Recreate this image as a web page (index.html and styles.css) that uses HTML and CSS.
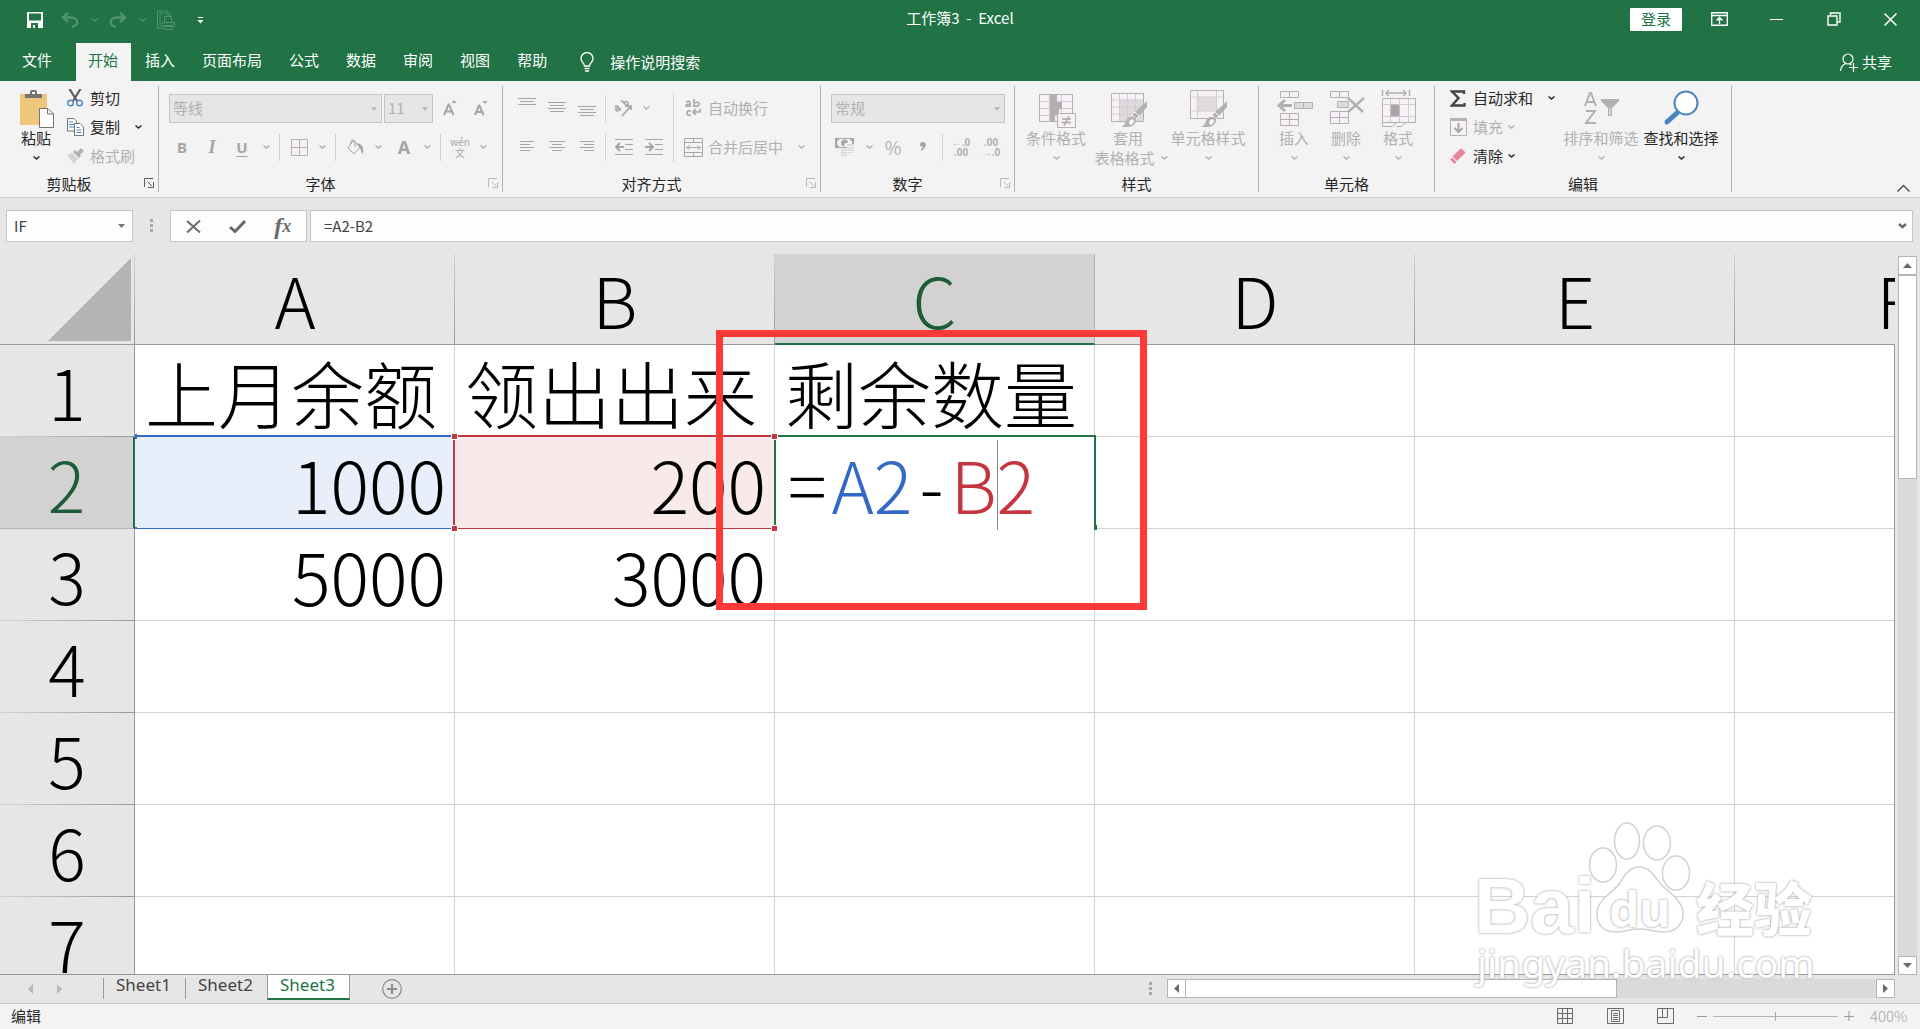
FILE: index.html
```html
<!DOCTYPE html>
<html lang="zh-CN">
<head>
<meta charset="utf-8">
<title>工作簿3 - Excel</title>
<link rel="stylesheet" href="styles.css">
</head>
<body>
<svg class="defs" aria-hidden="true">
  <symbol id="chev" viewBox="0 0 7 4"><path d="M.5 .5 3.5 3 6.5 .5" fill="none" stroke="currentColor" stroke-width="1.4"/></symbol>
  <symbol id="launch" viewBox="0 0 10 10"><path d="M.5 9V.5H9M3.500 3.500 8 8M9.500 4v5.500H4" fill="none" stroke="currentColor"/></symbol>
  <symbol id="brush" viewBox="0 0 28 28"><path d="M27 1v6l-8 9-4-4z" fill="#b1b1b1"/><path d="M15 12l4 4-3 3-4-4z" fill="#b1b1b1" stroke="#f3f3f3" stroke-width="1"/><path d="M1 27c4-1 4-5 6-8 2-3 7-3 9 0 1 4-3 8-8 8z" fill="#b1b1b1"/><path d="M9 23c0-3 3-5 5-3 1 2-2 5-4 5z" fill="#f3f3f3"/></symbol>
</svg>

<header class="top">
  <div class="titlebar">
    <div class="quick">
      <button class="qb save" aria-label="保存"><svg width="16" height="16" viewBox="0 0 16 16"><path d="M0 0h16v16H0zM2 1.500v7h12v-7zM4 11v5h2v-3h2v3h3v-5z" fill="#fff" fill-rule="evenodd"/></svg></button>
      <button class="qb" aria-label="撤消"><svg width="18" height="16" viewBox="0 0 18 16"><path d="M7 1 2 5.500 7 10M2 5.500h8c8 0 8 9 1 9" fill="none" stroke="#4f9270" stroke-width="2.500"/></svg></button>
      <button class="qc" aria-label="撤消选项"><svg width="7" height="4"><use href="#chev"/></svg></button>
      <button class="qb" aria-label="恢复"><svg width="18" height="16" viewBox="0 0 18 16"><path d="M11 1l5 4.500-5 4.500M16 5.500H8c-8 0-8 9-1 9" fill="none" stroke="#4f9270" stroke-width="2.500"/></svg></button>
      <button class="qc" aria-label="恢复选项"><svg width="7" height="4"><use href="#chev"/></svg></button>
      <button class="qb print" aria-label="打印预览"><svg width="20" height="20" viewBox="0 0 20 20" fill="none" stroke="#4f9270"><path d="M7 18.500H1.500V1H11l4 4M11 1v4h4M7 16H4V3h5"/><path d="M8.500 12V6.500h7V12M6.500 12.500h12v4h-12zM8.500 15.500h8v4h-8z"/></svg></button>
      <button class="qb" aria-label="自定义快速访问工具栏"><svg width="7" height="7" viewBox="0 0 7 7"><path d="M1 0h5v1H1zM.5 3h6l-3 3.500z" fill="#fff"/></svg></button>
    </div>
    <h1 class="title">工作簿3&nbsp; -&nbsp; Excel</h1>
    <div class="window">
      <button class="login">登录</button>
      <button class="wb" aria-label="功能区显示选项"><svg width="17" height="14" viewBox="0 0 17 14" fill="none" stroke="#fff" stroke-width="1.400"><path d="M.7.7h15.600v12.600H.7zM.7 3.500h15.600M8.500 12V6M5.500 8.500l3-3 3 3"/></svg></button>
      <button class="wb" aria-label="最小化"><svg width="13" height="14"><path d="M0 7.500h13" stroke="#fff"/></svg></button>
      <button class="wb" aria-label="向下还原"><svg width="14" height="14" viewBox="0 0 14 14" fill="none" stroke="#fff" stroke-width="1.400"><path d="M1 4h9v9H1zM3.500 4V1H13v9h-3"/></svg></button>
      <button class="wb" aria-label="关闭"><svg width="13" height="13" viewBox="0 0 13 13"><path d="M.5.5l12 12m0-12-12 12" stroke="#fff" stroke-width="1.500"/></svg></button>
    </div>
  </div>
  <nav class="tabs">
    <a class="tab file" href="#">文件</a>
    <a class="tab active" href="#">开始</a>
    <a class="tab" href="#">插入</a>
    <a class="tab" href="#">页面布局</a>
    <a class="tab" href="#">公式</a>
    <a class="tab" href="#">数据</a>
    <a class="tab" href="#">审阅</a>
    <a class="tab" href="#">视图</a>
    <a class="tab" href="#">帮助</a>
    <a class="tell" href="#"><svg width="14" height="20" viewBox="0 0 14 20" fill="none" stroke="#fff" stroke-width="1.300"><path d="M4.500 14c0-3-3.500-4-3.500-7.500a6 6 0 0 1 12 0C13 10 9.500 11 9.500 14zM4.500 16.500h5M5 19h4"/></svg>操作说明搜索</a>
    <a class="share" href="#"><svg width="18" height="19" viewBox="0 0 18 19" fill="none" stroke="#fff" stroke-width="1.200"><circle cx="8" cy="6" r="5"/><path d="M.6 18c0-4 2-6 5-7.500M9.500 11l2 1M13.500 10v9M9 14.500h9"/></svg>共享</a>
  </nav>
</header>

<section class="ribbon">
  <div class="group">
    <div class="body g-clip">
      <button class="big paste"><span class="pic"><svg width="36" height="38" viewBox="0 0 36 38"><path d="M1 4h27v31H1z" fill="#eec77c"/><path d="M6 8V4h5V2q0-2 2-2h3q2 0 2 2v2h5v4z" fill="#737373"/><path d="M13 2h3v2h-3z" fill="#fff"/><path d="M20.500 18.500h8.500l5.500 5.500v13.500h-14z" fill="#fff" stroke="#737373"/><path d="M28.500 18v6h6" fill="none" stroke="#737373"/></svg></span><span>粘贴</span><svg class="ch" width="7" height="4"><use href="#chev"/></svg></button>
      <div class="stack">
        <button class="small"><span class="si"><svg width="16" height="18" viewBox="0 0 16 18"><path d="M2.500 0 10 12M13.500 0 6 12" stroke="#5c5c5c" stroke-width="2.200"/><g fill="none" stroke="#4a83bd" stroke-width="1.400"><circle cx="3.500" cy="14" r="2.800"/><circle cx="12.500" cy="14" r="2.800"/></g></svg></span>剪切</button>
        <button class="small"><span class="si"><svg width="17" height="18" viewBox="0 0 17 18"><path d="M.5.5H7L9.500 3v10H.5z" fill="#fff" stroke="#737373"/><path d="M2 4h4M2 6.500h5M2 9h5" stroke="#4a83bd"/><path d="M7.500 5.500H13l3.500 3.500v8.500h-9z" fill="#fff" stroke="#737373"/><path d="M9.500 9.500h3M9.500 12h5M9.500 14.500h5" stroke="#4a83bd"/></svg></span>复制<svg class="ch far" width="7" height="4"><use href="#chev"/></svg></button>
        <button class="small" disabled><span class="si"><svg width="17" height="16" viewBox="0 0 17 16"><path d="M0 7l5-2 6 6-4 5z" fill="#d6d2d6"/><path d="M6 4l2-2 6 6-2 2zM10 4l4-4 3 3-4 4z" fill="#b1b1b1"/></svg></span>格式刷</button>
      </div>
    </div>
    <div class="name">剪贴板<button class="launch" aria-label="剪贴板设置"><svg width="10" height="10"><use href="#launch"/></svg></button></div>
  </div>

  <div class="group">
    <div class="body rows g-font">
      <div class="row">
        <label class="combo c-font"><select aria-label="字体" disabled><option>等线</option></select></label>
        <label class="combo c-size"><select aria-label="字号" disabled><option>11</option></select></label>
        <button class="ib" disabled aria-label="增大字号"><svg width="14" height="16" viewBox="0 0 14 16"><path d="M1 15 5.500 4.500h.5L10.500 15M3 11.500h6" fill="none" stroke="#a6a6a6" stroke-width="2"/><path d="M8.500 3l2.500-3 2.500 3z" fill="#a6a6a6"/></svg></button>
        <button class="ib" disabled aria-label="减小字号"><svg width="14" height="16" viewBox="0 0 14 16"><path d="M1 15 5 5.500h.5L9.500 15M3 12h5" fill="none" stroke="#a6a6a6" stroke-width="2"/><path d="M8.500 1l2.500 3 2.500-3z" fill="#a6a6a6"/></svg></button>
      </div>
      <div class="row">
        <button class="ib b" disabled>B</button><button class="ib i" disabled>I</button><button class="ib u" disabled>U</button><button class="cb" disabled aria-label="下划线选项"><svg width="7" height="4"><use href="#chev"/></svg></button>
        <span class="sep"></span>
        <button class="ic" disabled aria-label="边框"><svg width="17" height="17" viewBox="0 0 17 17" fill="#f7f1f7" stroke="#b1b1b1"><path d="M.5.5h16v16H.5zM8.500.5v16M.5 8.500h16"/></svg></button><button class="cb" disabled aria-label="边框选项"><svg width="7" height="4"><use href="#chev"/></svg></button>
        <span class="sep"></span>
        <button class="ic" disabled aria-label="填充颜色"><svg width="17" height="17" viewBox="0 0 17 17"><path d="M6 2l7 6-6 7-6-6z" fill="#f7f1f7" stroke="#a6a6a6"/><path d="M4 5V2q1.500-2.500 4 0v6" fill="none" stroke="#a6a6a6"/><path d="M10 4c5 1 7 4 6 11-2-1-2-5-4-7z" fill="#a6a6a6"/></svg></button><button class="cb" disabled aria-label="填充颜色选项"><svg width="7" height="4"><use href="#chev"/></svg></button>
        <button class="ic fc" disabled>A</button><button class="cb" disabled aria-label="字体颜色选项"><svg width="7" height="4"><use href="#chev"/></svg></button>
        <span class="sep"></span>
        <button class="ic wen" disabled><span>wén</span><span>文</span></button><button class="cb" disabled aria-label="拼音选项"><svg width="7" height="4"><use href="#chev"/></svg></button>
      </div>
    </div>
    <div class="name">字体<button class="launch off" aria-label="字体设置"><svg width="10" height="10"><use href="#launch"/></svg></button></div>
  </div>

  <div class="group">
    <div class="body g-align">
      <div class="rows">
        <div class="row">
          <button class="ib" disabled aria-label="顶端对齐"><svg width="18" height="20" viewBox="0 0 18 20" stroke="#a6a6a6"><path d="M0 .5h18M2 3.500h14M0 6.500h18"/></svg></button><button class="ib" disabled aria-label="垂直居中"><svg width="18" height="20" viewBox="0 0 18 20" stroke="#a6a6a6"><path d="M0 4.500h18M2 7.500h14M0 10.500h18M2 13.500h14"/></svg></button><button class="ib" disabled aria-label="底端对齐"><svg width="18" height="20" viewBox="0 0 18 20" stroke="#a6a6a6"><path d="M0 8.500h18M2 11.500h14M0 14.500h18M2 17.500h14"/></svg></button>
          <span class="sep"></span>
          <button class="ic ori" disabled aria-label="方向"><svg width="20" height="18" viewBox="0 0 20 18"><g fill="none" stroke="#a6a6a6" stroke-width="1.700"><path d="M2 8q2-2 3 0l3 3M6 9q-4 0-3 2t5-1M8 1l7 7M10 4q4-3 5 0t-3 3M9 17 18 7M14 7h4v4"/></g></svg></button><button class="cb" disabled aria-label="方向选项"><svg width="7" height="4"><use href="#chev"/></svg></button>
        </div>
        <div class="row">
          <button class="ib" disabled aria-label="左对齐"><svg width="14" height="12" stroke="#a6a6a6"><path d="M0 .5h14M0 3.500h10M0 6.500h14M0 9.500h10"/></svg></button><button class="ib" disabled aria-label="居中"><svg width="16" height="12" stroke="#a6a6a6"><path d="M0 .5h16M3 3.500h10M0 6.500h16M3 9.500h10"/></svg></button><button class="ib" disabled aria-label="右对齐"><svg width="14" height="12" stroke="#a6a6a6"><path d="M0 .5h14M4 3.500h10M0 6.500h14M4 9.500h10"/></svg></button>
          <span class="sep"></span>
          <button class="ib" disabled aria-label="减少缩进量"><svg width="18" height="17" viewBox="0 0 18 17" fill="none" stroke="#a6a6a6"><path d="M0 .5h18M10 5.500h8M10 10.500h8M0 15.500h18"/><path d="M1 8h8M5 4 1 8l4 4" stroke-width="2"/></svg></button><button class="ib" disabled aria-label="增加缩进量"><svg width="18" height="17" viewBox="0 0 18 17" fill="none" stroke="#a6a6a6"><path d="M0 .5h18M10 5.500h8M10 10.500h8M0 15.500h18"/><path d="M0 8h8M4 4l4 4-4 4" stroke-width="2"/></svg></button>
        </div>
      </div>
      <span class="sep tall"></span>
      <div class="rows">
        <div class="row"><button class="txt" disabled><span class="ib"><svg width="16" height="18" viewBox="0 0 16 18" fill="none" stroke="#a6a6a6" stroke-width="1.600"><path d="M1 3q4-2 4 1v4M5 5q-4 0-4 1.500T5 7M9 0v8M9 4q5-2 5 1t-5 2M6 12q-4-1-4 2t4 2M15 10v3H8M11 10l-3 3 3 3"/></svg></span>自动换行</button></div>
        <div class="row"><button class="txt" disabled><span class="ib"><svg width="19" height="19" viewBox="0 0 19 19" fill="none" stroke="#a6a6a6"><path d="M.5.5h18v18H.5zM.5 4.500h18M.5 14.500h18M9.500.5v4M9.500 14.500v4M2.500 9.500h14M5.500 7 3 9.500 5.500 12M13.500 7 16 9.500 13.500 12"/></svg></span>合并后居中<svg class="ch mer" width="7" height="4"><use href="#chev"/></svg></button></div>
      </div>
    </div>
    <div class="name">对齐方式<button class="launch off" aria-label="对齐设置"><svg width="10" height="10"><use href="#launch"/></svg></button></div>
  </div>

  <div class="group">
    <div class="body rows g-num">
      <div class="row"><label class="combo c-num"><select aria-label="数字格式" disabled><option>常规</option></select></label></div>
      <div class="row">
        <button class="ib" disabled aria-label="会计数字格式"><svg width="20" height="20" viewBox="0 0 20 20"><path d="M0 1h19v10H0z" fill="#a6a6a6"/><path d="M2 4q2 0 2-2h11q0 2 2 2v4q-2 0-2 2H4q0-2-2-2z" fill="#f3f3f3"/><circle cx="9.500" cy="6" r="3.500" fill="#a6a6a6"/><path d="M10 6h4v4h-5z" fill="#f3f3f3"/><path d="M6 12h6v7H6zM12 7h7v9h-7z" fill="#dcd8dc"/><path d="M6 14.500h6M6 17h6M12 9.500h7M12 12h7M12 14.500h7" stroke="#f3f3f3"/></svg></button><button class="cb" disabled aria-label="货币选项"><svg width="7" height="4"><use href="#chev"/></svg></button><button class="ib pct" disabled>%</button><button class="ib" disabled aria-label="千位分隔样式"><svg width="6" height="10" viewBox="0 0 6 10"><path d="M3 0c4 0 4 6-2 9V7q2-1 2-2C-1 5-1 0 3 0z" fill="#a6a6a6"/></svg></button>
        <span class="sep"></span>
        <button class="ib dec" disabled><span>←.0</span><span>.00</span></button><button class="ib dec" disabled><span>.00</span><span>→.0</span></button>
      </div>
    </div>
    <div class="name">数字<button class="launch off" aria-label="数字设置"><svg width="10" height="10"><use href="#launch"/></svg></button></div>
  </div>

  <div class="group">
    <div class="body g-style">
      <button class="big w64" disabled><span class="pic"><svg width="38" height="38" viewBox="0 0 38 38"><path d="M1.500 4.500h33v27h-33z" fill="#f7f1f7" stroke="#b1b1b1"/><path d="M1 11.500h34M1 18.500h34M1 25.500h34M11.500 5v27M23.500 5v27" stroke="#d0ccd0"/><path d="M12 5h7v7h5v7h-3v6h-4v7h-5z" fill="#b1b1b1"/><path d="M19.500 23.500h18v14h-18z" fill="#f7f1f7" stroke="#b1b1b1"/><path d="M24 29h9M24 32.500h9M31 26l-5 10" stroke="#a6a6a6" stroke-width="1.300"/></svg></span><span>条件格式</span><svg class="ch" width="7" height="4"><use href="#chev"/></svg></button>
      <button class="big w80" disabled><span class="pic"><svg width="38" height="38" viewBox="0 0 38 38"><path d="M1.500 3.500h32v28h-32z" fill="#f7f1f7" stroke="#b1b1b1"/><path d="M10 10h23v21H10z" fill="#dedade"/><path d="M2 10h31M2 17h31M2 24h31M9.500 4v27M17.500 4v27M25.500 4v27" stroke="#d0ccd0"/><use href="#brush" x="10" y="10" width="28" height="28"/></svg></span><span>套用</span><span class="line">表格格式<svg width="7" height="4"><use href="#chev"/></svg></span></button>
      <button class="big w80" disabled><span class="pic"><svg width="38" height="38" viewBox="0 0 38 38"><path d="M.5.5h33v28H.5z" fill="#f7f1f7" stroke="#b1b1b1"/><path d="M8 7h18v14H8z" fill="#dedade"/><path d="M1 7h32M1 21h32M7.500 1v27M26.500 1v27" stroke="#d0ccd0"/><use href="#brush" x="10" y="10" width="28" height="28"/></svg></span><span>单元格样式</span><svg class="ch" width="7" height="4"><use href="#chev"/></svg></button>
    </div>
    <div class="name plain">样式</div>
  </div>

  <div class="group">
    <div class="body g-cells">
      <button class="big w52" disabled><span class="pic"><svg width="38" height="38" viewBox="0 0 38 38" fill="#f7f1f7" stroke="#b1b1b1"><path d="M4.500 1.500h18v6h-18zM13.500 1.500v6M4.500 23.500h18v12h-18zM4.500 29.500h18M13.500 23.500v12"/><path d="M18.500 12.500h18v6h-18zM27.500 12.500v6" fill="#dedade"/><path d="M3 15.500h13M9 10l-6 5.500 6 5.500" fill="none" stroke-width="3"/></svg></span><span>插入</span><svg class="ch" width="7" height="4"><use href="#chev"/></svg></button>
      <button class="big w52" disabled><span class="pic"><svg width="38" height="38" viewBox="0 0 38 38" fill="#f7f1f7" stroke="#b1b1b1"><path d="M2.500 1.500h18v6h-18zM11.500 1.500v6M2.500 21.500h18v12h-18zM2.500 27.500h18M11.500 21.500v12"/><path d="M9.500 11.500h11v6h-11z" fill="#dedade"/><path d="M20 8l15 14M36 8 20 22" stroke-width="2.500"/></svg></span><span>删除</span><svg class="ch" width="7" height="4"><use href="#chev"/></svg></button>
      <button class="big w52" disabled><span class="pic"><svg width="38" height="38" viewBox="0 0 38 38" fill="#f7f1f7" stroke="#b1b1b1"><path d="M2.500 0v6M29.500 0v6M6 3h20M9 0 6 3l3 3M23 0l3 3-3 3" fill="none" stroke-width="1.500"/><path d="M2.500 8.500h33v24h-33zM2.500 32.500v4h10l4-4M16 36.500h6l4-4"/><path d="M3 14.500h32M3 26.500h32M10.500 9v23M19.500 9v23M28.500 9v23" stroke="#d0ccd0"/><path d="M11 15h8v11h-8z" fill="#a6a6a6"/></svg></span><span>格式</span><svg class="ch" width="7" height="4"><use href="#chev"/></svg></button>
    </div>
    <div class="name plain">单元格</div>
  </div>

  <div class="group">
    <div class="body g-edit">
      <div class="stack">
        <button class="small"><span class="si"><svg width="16" height="17" viewBox="0 0 16 17"><path d="M14 4V1.500H2L8.500 8 2 15.500h12.500V13" fill="none" stroke="#444" stroke-width="2.400"/></svg></span>自动求和<svg class="ch far" width="7" height="4"><use href="#chev"/></svg></button>
        <button class="small" disabled><span class="si"><svg width="17" height="18" viewBox="0 0 17 18"><path d="M.5.5h16v17H.5z" fill="#f7f1f7" stroke="#b1b1b1"/><path d="M0 0h17v3H0z" fill="#b1b1b1"/><path d="M8.500 5v9M4.500 10l4 4 4-4" fill="none" stroke="#a6a6a6" stroke-width="2"/></svg></span>填充<svg class="ch near" width="7" height="4"><use href="#chev"/></svg></button>
        <button class="small"><span class="si"><svg width="16" height="16" viewBox="0 0 16 16"><path d="M10 1q1-1 2 0l3.500 3.500L7 13 2.500 8.500z" fill="#e8859a"/><path d="M2 9.500 6.500 14l-2 2L0 11.500z" fill="#e8859a"/></svg></span>清除<svg class="ch near" width="7" height="4"><use href="#chev"/></svg></button>
      </div>
      <button class="big w80" disabled><span class="pic"><svg width="38" height="38" viewBox="0 0 38 38"><path d="M3 16 8 3h1l5 13M5 12h7M4 21h9L4 33h10" fill="none" stroke="#b1b1b1" stroke-width="2"/><path d="M19 9h18v2l-7 7v8h-4v-8l-7-7z" fill="#b1b1b1"/><path d="M28 18v7" stroke="#f3f3f3"/></svg></span><span>排序和筛选</span><svg class="ch" width="7" height="4"><use href="#chev"/></svg></button>
      <button class="big w80"><span class="pic"><svg width="38" height="38" viewBox="0 0 38 38"><path d="M16 22 5 32" stroke="#4a83bd" stroke-width="5" stroke-linecap="round"/><circle cx="24" cy="13" r="11.500" fill="#fff" stroke="#4a83bd" stroke-width="2"/></svg></span><span>查找和选择</span><svg class="ch" width="7" height="4"><use href="#chev"/></svg></button>
    </div>
    <div class="name plain">编辑</div>
  </div>
  <button class="collapse" aria-label="折叠功能区"><svg width="13" height="8"><path d="M.5 7.500 6.500 1.500 12.500 7.500" fill="none" stroke="#444" stroke-width="1.300"/></svg></button>
</section>

<section class="formula">
  <div class="box namebox"><input aria-label="名称框" value="IF"><svg width="7" height="4"><path d="M0 0h7L3.500 4z" fill="#737373"/></svg></div>
  <span class="dots"></span>
  <div class="box actions">
    <button aria-label="取消"><svg width="15" height="13"><path d="M1 1l13 11.500M14 .5 1 12.500" stroke="#6a6a6a" stroke-width="2"/></svg></button>
    <button aria-label="输入"><svg width="17" height="13"><path d="M1 7l5 4.500L16 1" fill="none" stroke="#6a6a6a" stroke-width="3"/></svg></button>
    <button class="fx" aria-label="插入函数">f<small>x</small></button>
  </div>
  <div class="box expr"><input aria-label="编辑栏" value="=A2-B2"><svg width="9" height="6"><path d="M1 1l3.500 3L8 1" fill="none" stroke="#6a6a6a" stroke-width="2.500"/></svg></div>
</section>

<main class="work">
  <div class="sheet">
    <div class="canvas">
    <table class="grid">
      <colgroup><col class="c0"><col><col><col><col><col><col></colgroup>
      <thead><tr><th class="corner"><svg width="83" height="83"><path d="M83 0v83H0z" fill="#b4b4b4"/></svg></th><th>A</th><th>B</th><th class="sel">C</th><th>D</th><th>E</th><th>F</th></tr></thead>
      <tbody>
        <tr><th>1</th><td class="han">上月余额</td><td class="han">领出出来</td><td class="han">剩余数量</td><td></td><td></td><td></td></tr>
        <tr><th class="sel">2</th><td class="num refa">1000</td><td class="num refb">200<i class="h tl"></i><i class="h bl"></i><i class="h tr"></i><i class="h br"></i></td><td class="edit"><div class="expression"><span>=</span><span class="blue">A2</span><span>-</span><span class="red">B<i class="caret"></i>2</span></div></td><td></td><td></td><td></td></tr>
        <tr><th>3</th><td class="num">5000</td><td class="num">3000</td><td></td><td></td><td></td><td></td></tr>
        <tr><th>4</th><td></td><td></td><td></td><td></td><td></td><td></td></tr>
        <tr><th>5</th><td></td><td></td><td></td><td></td><td></td><td></td></tr>
        <tr><th>6</th><td></td><td></td><td></td><td></td><td></td><td></td></tr>
        <tr><th>7</th><td></td><td></td><td></td><td></td><td></td><td></td></tr>
      </tbody>
    </table>
    <div class="callout"></div>
    </div>
  </div>
  <div class="vscroll">
    <button aria-label="向上"><svg width="9" height="5"><path d="M0 5h9L4.500 0z" fill="#6a6a6a"/></svg></button>
    <div class="vtrack"><div class="vthumb"></div></div>
    <button aria-label="向下"><svg width="9" height="5"><path d="M0 0h9L4.500 5z" fill="#6a6a6a"/></svg></button>
  </div>
</main>

<div class="sheets">
  <div class="nav"><button aria-label="上一张"><svg width="5" height="10"><path d="M5 0v10L0 5z" fill="#b8b8b8"/></svg></button><button aria-label="下一张"><svg width="5" height="10"><path d="M0 0v10l5-5z" fill="#b8b8b8"/></svg></button></div>
  <a class="st" href="#">Sheet1</a><a class="st" href="#">Sheet2</a><a class="st on" href="#">Sheet3</a>
  <button class="add" aria-label="新工作表"><svg width="20" height="20" fill="none" stroke="#8a8a8a"><circle cx="10" cy="10" r="9.300" stroke-width="1.200"/><path d="M10 5v10M5 10h10" stroke-width="2"/></svg></button>
  <span class="dots end"></span>
  <div class="hscroll">
    <button aria-label="向左"><svg width="5" height="9"><path d="M5 0v9L0 4.500z" fill="#6a6a6a"/></svg></button>
    <div class="htrack"><div class="hthumb"></div></div>
    <button aria-label="向右"><svg width="5" height="9"><path d="M0 0v9l5-4.500z" fill="#6a6a6a"/></svg></button>
  </div>
</div>

<footer class="status">
  <span class="mode">编辑</span>
  <button aria-label="普通"><svg width="17" height="17" fill="none" stroke="#6a6a6a"><path d="M.5.5h15v15H.5zM.5 5.500h15M.5 10.500h15M5.500.5v15M10.500.5v15"/></svg></button>
  <button aria-label="页面布局"><svg width="17" height="17" fill="none" stroke="#6a6a6a"><path d="M.5.5h16v15H.5zM4.500 2.500h8v11h-8zM6 5.500h5M6 7.500h5M6 9.500h5M6 11.500h5"/></svg></button>
  <button aria-label="分页预览"><svg width="17" height="17" fill="none" stroke="#6a6a6a"><path d="M.5.5h16v15H.5zM.5 9.500h10V.5M5.500.5v9"/></svg></button>
  <span class="zoomer">
    <svg width="10" height="10"><path d="M0 5.500h10" stroke="#999"/></svg>
    <input type="range" aria-label="缩放" min="0" max="100" value="50">
    <svg width="10" height="10"><path d="M0 5.500h10M5 0v10" stroke="#999"/></svg>
  </span>
  <span class="percent">400%</span>
</footer>

<div class="mark" aria-hidden="true">
  <div class="brand">
    <span class="bai">Bai</span>
    <span class="paw"><svg width="104" height="114" viewBox="0 0 104 114"><g class="pawshape"><ellipse cx="15" cy="44" rx="13.500" ry="17"/><ellipse cx="39" cy="20" rx="12.500" ry="18"/><ellipse cx="69" cy="22" rx="13.500" ry="17"/><ellipse cx="88" cy="52" rx="13.500" ry="17"/><path d="M51 46c10 0 15 8 20 15 7 9 24 17 24 32 0 12-10 19-21 18-10-1-14-3-23-3s-14 3-24 3c-10 0-18-6-18-18 0-15 16-21 23-31 4-7 9-16 19-16z"/></g></svg><b>du</b></span>
    <span class="jy">经验</span>
  </div>
  <div class="site">jingyan.baidu.com</div>
</div>
</body>
</html>
```

FILE: styles.css
```css
* { box-sizing: border-box; }
html, body { height: 100%; }
body {
  margin: 0;
  position: relative;
  display: flex;
  flex-direction: column;
  min-height: 0;
  overflow: hidden;
  background: #e6e6e6;
  color: #262626;
  font: 15px/20px "Noto Sans CJK SC", sans-serif;
}
button, input, select { font: inherit; color: inherit; border: 0; background: none; padding: 0; margin: 0; }
button { display: flex; align-items: center; justify-content: center; flex: none; white-space: nowrap; }
button:disabled, select:disabled { color: #b1b1b1; opacity: 1; }
a { color: inherit; text-decoration: none; }
svg { display: block; flex: none; }
.defs { display: none; }

/* title bar and tabs */
.top { background: #217346; color: #fff; flex: none; }
.titlebar { display: grid; grid-template-columns: 1fr auto 1fr; height: 43px; }
.quick { display: flex; align-items: center; height: 40px; padding-left: 20px; }
.qb { width: 30px; height: 30px; }
.quick .qb { margin-right: 4px; }
.quick .save { margin-right: 5px; }
.quick .print { margin: 0 4px 0 0; }
.qc { width: 10px; height: 30px; margin-right: 4px; color: #4f9270; }
.title { margin: 0; padding-top: 8px; font-size: 15px; font-weight: 400; line-height: 20px; }
.window { display: flex; justify-content: flex-end; align-items: center; height: 38px; padding-right: 1px; }
.login { width: 52px; height: 23px; background: #fff; color: #217346; border-radius: 1px; }
.wb { width: 57px; height: 30px; }
.login + .wb { margin-left: 9px; }
.tabs { display: flex; height: 38px; line-height: 34px; }
.tab { padding: 0 13px 0 14px; }
.file { padding: 0 24px 0 22px; }
.active { padding: 0 13px 0 12px; background: #f3f3f3; color: #217346; }
.tell { display: flex; align-items: center; gap: 16px; padding-left: 20px; }
.share { display: flex; align-items: center; gap: 4px; margin-left: auto; padding-right: 28px; }

/* ribbon */
.ribbon { display: flex; flex: none; height: 117px; padding: 5px 0; background: #f3f3f3; border-bottom: 1px solid #d2d2d2; }
.group { display: flex; flex-direction: column; border-right: 1px solid #b4b4b4; height: 106px; }
.body { display: flex; flex: 1; }
.name { position: relative; display: flex; justify-content: center; height: 18px; line-height: 20px; padding-right: 20px; }
.plain { padding-right: 0; }
.launch { position: absolute; right: 4px; top: 4px; color: #5c5c5c; }
.off { color: #b8b8b8; }
.rows { display: flex; flex-direction: column; gap: 11px; padding-top: 8px; }
.row { display: flex; align-items: center; height: 28px; }
.ib { width: 30px; height: 28px; display: flex; align-items: center; justify-content: center; }
.ic { width: 28px; height: 28px; }
.cb { width: 18px; height: 28px; }
.sep { width: 1px; height: 27px; margin: 0 5px 0 4px; background: #d2d2d2; flex: none; }
.big { flex-direction: column; justify-content: flex-start; align-self: flex-start; padding-top: 4px; }
.big .pic { height: 38px; }
.g-style .pic, .g-cells .pic { padding-left: 2px; }
.big .ch { margin-top: 8px; }
.line { display: flex; align-items: center; gap: 6px; padding-left: 6px; line-height: 19px; }
.paste { width: 40px; }
.paste .pic { padding-left: 2px; }
.stack { display: flex; flex-direction: column; gap: 1px; margin-top: -2px; }
.small { height: 28px; justify-content: flex-start; }
.si { width: 18px; margin-right: 6px; display: flex; justify-content: center; }
.far { margin-left: 15px; }
.near { margin-left: 5px; }
.w52 { width: 52px; }
.w64 { width: 64px; }
.w80 { width: 80px; }
.g-clip { width: 158px; padding-left: 16px; gap: 10px; }
.g-font { width: 343px; padding-left: 8px; }
.g-font .row:first-child { padding-left: 2px; gap: 2px; }
.g-align { width: 317px; padding-left: 9px; }
.g-align .rows .sep { margin: 0 3px; }
.g-align .tall { height: 69px; margin: 7px 4px 0 0; }
.g-align > .rows:first-child { width: 161px; }
.g-num { width: 193px; padding-left: 9px; }
.g-num .sep { margin: 0 3px 0 4px; }
.g-style { width: 243px; padding-left: 9px; }
.g-cells { width: 175px; padding-left: 9px; }
.g-edit { width: 296px; padding-left: 14px; }
.g-edit .stack { width: 112px; }
.combo { position: relative; display: block; height: 29px; }
.combo select { appearance: none; width: 100%; height: 100%; padding: 0 3px; background: #e6e6e6; border: 1px solid #c6c6c6; }
.combo::after { content: ""; position: absolute; right: 5px; top: 13px; border: 3px solid transparent; border-top: 4px solid #b8b8b8; border-bottom: 0; }
.c-font { width: 213px; }
.c-size { width: 49px; }
.c-size + .ib { margin-left: 1px; width: 28px; }
.c-num { width: 174px; margin-left: 1px; }
.b, .i, .u, .fc { font-family: "Noto Sans", sans-serif; font-weight: 700; }
.ib.b, .ib.i, .ib.u { color: #a6a6a6; }
.i { font-family: "Liberation Serif", serif; font-style: italic; font-size: 18px; }
.u { text-decoration: underline; text-underline-offset: 3px; }
.ic.fc { margin-left: 3px; font-size: 18px; color: #a6a6a6; }
.wen { flex-direction: column; font-size: 10px; line-height: 11px; }
.ic.wen { color: #a6a6a6; }
.pct { font-size: 18px; }
.dec { flex-direction: column; font: 700 10px/10px "Noto Sans", sans-serif; }
.txt { height: 28px; }
.mer { margin-left: 15px; }
.collapse { margin-left: auto; margin-right: 10px; align-self: flex-end; }

/* formula bar */
.formula { display: flex; flex: none; height: 56px; padding: 12px 7px 12px 6px; }
.box { display: flex; align-items: center; background: #fdfdfd; border: 1px solid #c6c6c6; height: 32px; }
.box input { flex: 1; min-width: 0; height: 28px; padding-bottom: 2px; color: #444; outline: 0; }
.namebox { width: 127px; padding: 0 7px; }
.dots { width: 3px; height: 14px; margin: 9px 17px; background: repeating-linear-gradient(#a6a6a6 0 3px, transparent 3px 5px); flex: none; }
.actions { width: 137px; justify-content: space-around; padding: 0 1px 0 0; }
.actions button { width: 40px; height: 28px; }
.actions .fx { font: italic 700 24px/28px "Liberation Serif", serif; color: #6a6a6a; }
.fx small { font-size: 18px; }
.expr { flex: 1; margin-left: 3px; padding: 0 5px 0 13px; }

/* worksheet */
.work { display: flex; flex: 1; min-height: 0; }
.sheet { position: relative; flex: 1; min-width: 0; overflow: hidden; border-bottom: 1px solid #999; }
.sheet::after { content: ""; position: absolute; right: 0; top: 90px; bottom: 0; width: 1px; background: #999; }
.canvas { position: relative; }
.grid { table-layout: fixed; width: 2055px; border-collapse: separate; border-spacing: 0; font-size: 70px; line-height: 90px; font-weight: 300; color: #000; }
.c0 { width: 135px; }
.grid th, .grid td { padding: 0; height: 92px; font-weight: inherit; white-space: nowrap; }
.grid thead th { height: 91px; line-height: 88px; border-bottom: 1px solid #999; background: linear-gradient(#d2d2d2, #999) right / 1px 100% no-repeat, #e6e6e6; }
.grid tbody th { border-right: 1px solid #999; background: linear-gradient(90deg, #d2d2d2, #999) bottom / 100% 1px no-repeat, #e6e6e6; }
.grid td { background: #fff; border-right: 1px solid #d2d2d2; border-bottom: 1px solid #d2d2d2; }
.grid thead .sel { color: #1e5c38; background: #d2d2d2; border-bottom: 2px solid #217346; border-right: 1px solid #b4b4b4; }
.grid tbody .sel { color: #1e5c38; background: #d2d2d2; border-right: 2px solid #217346; border-bottom: 1px solid #b4b4b4; }
.grid .corner { vertical-align: bottom; }
.corner svg { margin: 0 0 3px 48px; }
.grid .han { font-size: 73px; padding-left: 10px; }
.grid .num { position: relative; padding-right: 8px; text-align: right; font-size: 72px; }
.refa::before, .refb::before { content: ""; position: absolute; left: 0; right: -1px; top: -2px; bottom: -2px; border: solid #3269c8; border-width: 2px 0; }
.refa::after { content: ""; position: absolute; left: 0; top: -3px; bottom: -4px; width: 2px; background: linear-gradient(#3269c8 0 5px, transparent 5px calc(100% - 5px), #3269c8 calc(100% - 5px)); }
.grid .refa { background: #e8effa; }
.grid .refb { background: #f8eaea; border-right: 0; padding-right: 9px; }
.refb::before { left: -2px; right: 0; border-color: #c4353f; border-width: 2px 0 2px 2px; }
.h { position: absolute; z-index: 1; width: 7px; height: 7px; background: #c4353f; border: 1px solid #fff; }
.tl { left: -4px; top: -4px; }
.bl { left: -4px; bottom: -4px; }
.tr { right: -3px; top: -4px; }
.br { right: -3px; bottom: -4px; }
.grid .edit { position: relative; border-bottom-color: #fff; border-right: 0; font-size: 72px; }
.edit::before { content: ""; position: absolute; left: -1px; right: -1px; top: -2px; bottom: 3px; border: 2px solid #217346; border-bottom: 0; }
.edit::after { content: ""; position: absolute; right: -2px; bottom: -2px; width: 3px; height: 5px; background: #217346; }
.expression { display: flex; gap: 7px; padding-left: 13px; }
.expression span:nth-child(2) { margin-left: -2px; }
.blue { color: #3269c8; }
.red { color: #c4353f; }
.caret { position: absolute; top: 3px; width: 1px; height: 90px; background: #8a8a8a; }
.callout { position: absolute; left: 716px; top: 76px; width: 431px; height: 280px; border: 7px solid #ff3838; }

.vscroll { width: 19px; margin: 2px 3px 0 3px; display: flex; flex-direction: column; flex: none; }
.vscroll button { height: 19px; background: #fff; border: 1px solid #b4b4b4; }
.vtrack { flex: 1; background: #dadada; }
.vthumb { height: 30%; background: #fff; border: 1px solid #b4b4b4; }

/* sheet tabs */
.sheets { display: flex; flex: none; height: 28px; padding-right: 25px; }
.nav { display: flex; width: 103px; padding: 0 0 1px 28px; gap: 24px; }
.st { width: 82px; height: 21px; margin-top: 3px; padding-left: 12px; border-left: 1px solid #999; color: #444; font: 17px/14px "Noto Sans", sans-serif; }
.on { width: 83px; height: 26px; margin-top: -1px; padding: 4px 0 0 12px; background: #fff; color: #217346; border-right: 1px solid #999; border-bottom: 2px solid #217346; }
.add { margin-left: 32px; }
.end { margin: 7px 15px 0 auto; }
.hscroll { display: flex; width: 728px; height: 19px; margin-top: 4px; }
.hscroll button { width: 19px; background: #fff; border: 1px solid #b4b4b4; }
.htrack { flex: 1; background: #dadada; }
.hthumb { width: 431px; height: 19px; background: #fff; border: 1px solid #b4b4b4; border-left: 0; }

/* status bar */
.status { display: flex; align-items: center; flex: none; height: 26px; padding: 0 10px 1px 11px; background: #f3f3f3; border-top: 1px solid #c6c6c6; }
.mode { margin-right: auto; }
.status button { width: 50px; height: 20px; }
.zoomer { display: flex; align-items: center; gap: 6px; margin: 0 0 0 7px; }
.zoomer input { appearance: none; width: 125px; height: 9px; background: linear-gradient(#b4b4b4, #b4b4b4) center / 100% 1px no-repeat; }
.zoomer input::-webkit-slider-thumb { appearance: none; width: 1px; height: 9px; background: #a6a6a6; }
.percent { width: 40px; margin-left: 16px; color: #a6a6a6; font-weight: 300; }

/* watermark */
.mark { position: absolute; right: 96px; bottom: 44px; width: 350px; color: #fff; text-shadow: 0 0 2px #a6a6a6, 0 0 3px #c6c6c6; }
.brand { display: flex; align-items: flex-end; height: 114px; }
.bai { font: 700 78px/58px "Liberation Sans", sans-serif; width: 114px; }
.paw { position: relative; width: 106px; margin-right: 2px; }
.pawshape { fill: #fff; stroke: #d2d2d2; stroke-width: 1.500px; }
.paw b { position: absolute; left: 21px; top: 64px; font: 700 48px/48px "Noto Sans", sans-serif; }
.jy { font-size: 58px; line-height: 58px; font-weight: 900; }
.site { font: 39px/44px "Noto Sans", sans-serif; padding-left: 3px; margin-top: 6px; }
```
